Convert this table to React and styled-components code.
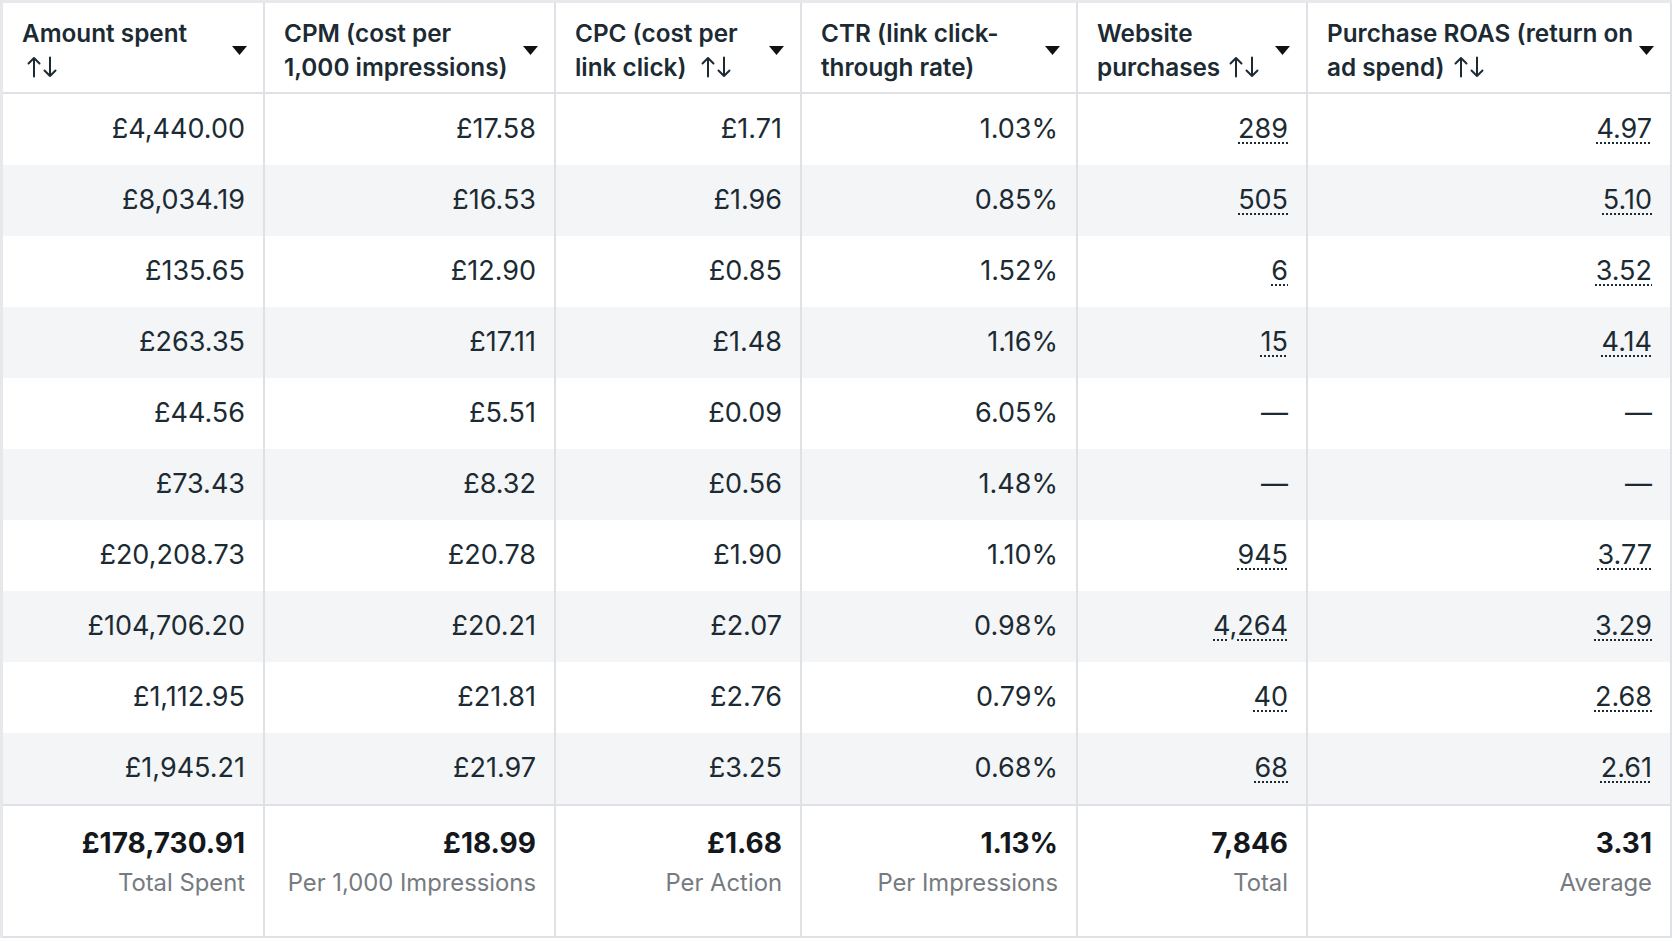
import React from "react";
import styled, { createGlobalStyle } from "styled-components";

const GlobalStyle = createGlobalStyle`
  html, body {
    margin: 0;
    padding: 0;
    background: #ffffff;
  }
  body {
    font-family: Inter, "Liberation Sans", Arial, sans-serif;
    color: #1c2b33;
  }
`;

const LINE = "#dfe1e4";

const Grid = styled.div`
  display: grid;
  grid-template-columns: 262px 291px 246px 276px 230px 364px;
  grid-template-rows: 91px repeat(10, 71px) 134px;
  border-top: 3px solid #e6e8eb;
  border-left: 3px solid #e6e8eb;
  width: fit-content;
`;

const HeadCell = styled.div`
  display: flex;
  align-items: center;
  justify-content: space-between;
  padding: 5px 16px 0 19px;
  border-right: 2px solid ${LINE};
  border-bottom: 2px solid ${LINE};
  background: #ffffff;
`;

const HeadTitle = styled.div`
  display: flex;
  flex-direction: column;
  font-size: 24.3px;
  font-weight: 600;
  line-height: 34px;
  color: #1c2b33;
  white-space: nowrap;
`;

const HeadLine = styled.span`
  display: flex;
  align-items: center;
  min-height: 34px;
`;

const SortIcon = styled.svg`
  width: 32px;
  height: 22px;
  margin-left: ${({ $gap }) => $gap || 0}px;
  flex: none;
`;

const Caret = styled.svg`
  width: 15px;
  height: 9px;
  flex: none;
`;

const Cell = styled.div`
  display: flex;
  align-items: center;
  justify-content: flex-end;
  padding: 0 18px 2px 10px;
  border-right: 2px solid ${LINE};
  background: ${({ $shade }) => ($shade ? "#f4f5f7" : "#ffffff")};
  font-size: 27px;
  color: #1c2b33;
  white-space: nowrap;
`;

const Dotted = styled.span`
  text-decoration: underline dotted;
  text-decoration-thickness: 2px;
  text-underline-offset: 4px;
`;

const FootCell = styled.div`
  display: flex;
  flex-direction: column;
  align-items: flex-end;
  padding: 17px 18px 0 10px;
  border-right: 2px solid ${LINE};
  border-top: 2px solid ${LINE};
  border-bottom: 2px solid ${LINE};
  white-space: nowrap;
`;

const FootValue = styled.div`
  font-size: 28px;
  font-weight: 700;
  line-height: 40px;
  color: #14181c;
`;

const FootLabel = styled.div`
  font-size: 23.8px;
  line-height: 40px;
  color: #767b81;
`;

const Arrows = ({ gap }) => (
  <SortIcon $gap={gap} viewBox="0 0 32 22" fill="none" stroke="#1c2b33" strokeWidth="2" strokeLinecap="round" strokeLinejoin="round">
    <path d="M8 20.5V2M2.5 7.5L8 2l5.5 5.5" />
    <path d="M24 1.5V20M18.5 14.5L24 20l5.5-5.5" />
  </SortIcon>
);

const DropCaret = () => (
  <Caret viewBox="0 0 15 9">
    <path d="M0 0h15L7.5 9z" fill="#111" />
  </Caret>
);

const columns = [
  { lines: ["Amount spent", ""], sortLine: 1, gap: 4 },
  { lines: ["CPM (cost per", "1,000 impressions)"] },
  { lines: ["CPC (cost per", "link click)"], sortLine: 1, gap: 14 },
  { lines: ["CTR (link click-", "through rate)"] },
  { lines: ["Website", "purchases"], sortLine: 1, gap: 8 },
  { lines: ["Purchase ROAS (return on", "ad spend)"], sortLine: 1, gap: 8 },
];

const rows = [
  ["£4,440.00", "£17.58", "£1.71", "1.03%", "289", "4.97"],
  ["£8,034.19", "£16.53", "£1.96", "0.85%", "505", "5.10"],
  ["£135.65", "£12.90", "£0.85", "1.52%", "6", "3.52"],
  ["£263.35", "£17.11", "£1.48", "1.16%", "15", "4.14"],
  ["£44.56", "£5.51", "£0.09", "6.05%", null, null],
  ["£73.43", "£8.32", "£0.56", "1.48%", null, null],
  ["£20,208.73", "£20.78", "£1.90", "1.10%", "945", "3.77"],
  ["£104,706.20", "£20.21", "£2.07", "0.98%", "4,264", "3.29"],
  ["£1,112.95", "£21.81", "£2.76", "0.79%", "40", "2.68"],
  ["£1,945.21", "£21.97", "£3.25", "0.68%", "68", "2.61"],
];

const totals = [
  ["£178,730.91", "Total Spent"],
  ["£18.99", "Per 1,000 Impressions"],
  ["£1.68", "Per Action"],
  ["1.13%", "Per Impressions"],
  ["7,846", "Total"],
  ["3.31", "Average"],
];

export default function App() {
  return (
    <>
      <GlobalStyle />
      <Grid>
        {columns.map((col, i) => (
          <HeadCell key={"h" + i}>
            <HeadTitle>
              {col.lines.map((line, j) => (
                <HeadLine key={j}>
                  {line}
                  {col.sortLine === j && <Arrows gap={col.gap} />}
                </HeadLine>
              ))}
            </HeadTitle>
            <DropCaret />
          </HeadCell>
        ))}
        {rows.map((row, r) =>
          row.map((value, c) => (
            <Cell key={r + "-" + c} $shade={r % 2 === 1}>
              {value === null ? "—" : c >= 4 ? <Dotted>{value}</Dotted> : value}
            </Cell>
          ))
        )}
        {totals.map(([value, label], i) => (
          <FootCell key={"f" + i}>
            <FootValue>{value}</FootValue>
            <FootLabel>{label}</FootLabel>
          </FootCell>
        ))}
      </Grid>
    </>
  );
}
